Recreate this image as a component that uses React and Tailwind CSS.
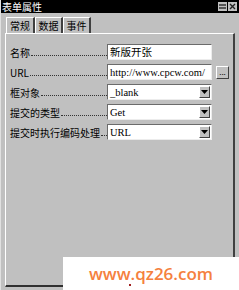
import React from "react";

const font = { fontFamily: '"Noto Sans CJK SC", "Liberation Sans", sans-serif' };
const serif = { fontFamily: '"Liberation Serif", serif' };

// sunken white field box
const Field = ({ children, dropdown }) => (
  <div className="flex h-[16px] w-[105px] items-stretch border border-t-[#6b6b6b] border-l-[#6b6b6b] border-r-[#ececec] border-b-[#ececec] bg-white">
    <div className="flex-1 overflow-hidden whitespace-nowrap pl-[2px] text-[10.5px] leading-[14px] text-black">
      {children}
    </div>
    {dropdown && (
      <div className="m-[1px] flex w-[11px] items-center justify-center border border-t-white border-l-white border-r-[#404040] border-b-[#404040] bg-[#c0c0c0]">
        <svg width="7" height="4" viewBox="0 0 7 4">
          <polygon points="0,0 7,0 3.5,4" fill="#000" />
        </svg>
      </div>
    )}
  </div>
);

const Row = ({ label, children, extra }) => (
  <div className="flex h-[20px] items-center">
    <div className="flex w-[101px] items-end pl-[4px] text-[10px] leading-[13px] text-black">
      <span className="whitespace-nowrap">{label}</span>
      <span className="mb-[3px] ml-[1px] flex-1 border-b border-dotted border-[#333]" />
    </div>
    {children}
    {extra}
  </div>
);

const Tab = ({ label, active }) => (
  <div
    className={`flex h-[16px] items-center justify-center whitespace-nowrap text-[10px] leading-[12px] text-black border-t border-l border-t-white border-l-white border-r-2 border-r-[#404040] ${
      active ? "w-[29px] -mb-[1px] bg-[#c0c0c0] z-10" : "w-[28px]"
    }`}
  >
    {label}
  </div>
);

export default function App() {
  return (
    <div
      className="relative h-[290px] w-[239px] overflow-hidden border-l border-l-[#e0e0e0] bg-[#c0c0c0]"
      style={font}
    >
      {/* TITLE BAR */}
      <div className="flex h-[13px] items-center justify-between bg-black pl-[1px] pr-[2px]">
        <span className="whitespace-nowrap text-[10px] leading-[13px] text-white">表单属性</span>
        <div className="flex gap-[1px]">
          <div className="flex h-[9px] w-[9px] flex-col justify-center gap-[1px] bg-[#c0c0c0] px-[1px]">
            <div className="h-[2px] bg-[#555]" />
            <div className="h-[2px] bg-[#555]" />
          </div>
          <div className="flex h-[9px] w-[9px] items-center justify-center bg-[#c0c0c0]">
            <svg width="7" height="7" viewBox="0 0 7 7">
              <path d="M1 1 L6 6 M6 1 L1 6" stroke="#222" strokeWidth="1.4" />
            </svg>
          </div>
        </div>
      </div>

      {/* BODY */}
      <div className="flex h-[274px] flex-col px-[4px] pt-[4px]">
        <div className="flex pl-[1px]">
          <Tab label="常规" active />
          <Tab label="数据" />
          <Tab label="事件" />
        </div>

        <div className="flex flex-1 flex-col border-t border-l border-t-white border-l-white border-r-2 border-b-2 border-r-[#404040] border-b-[#303030] pt-[8px] pr-[2px]">
          <Row label="名称">
            <Field>新版开张</Field>
          </Row>
          <Row
            label="URL"
            extra={
              <div className="ml-[4px] flex h-[13px] w-[13px] items-end justify-center border border-t-white border-l-white border-r-[#404040] border-b-[#404040] bg-[#c0c0c0] pb-[2px] text-[8px] leading-[8px]">
                ...
              </div>
            }
          >
            <Field>
              <span style={serif}>http://www.cpcw.com/</span>
            </Field>
          </Row>
          <Row label="框对象">
            <Field dropdown>
              <span style={serif}>_blank</span>
            </Field>
          </Row>
          <Row label="提交的类型">
            <Field dropdown>
              <span style={serif}>Get</span>
            </Field>
          </Row>
          <Row label="提交时执行编码处理">
            <Field dropdown>
              <span style={serif}>URL</span>
            </Field>
          </Row>
        </div>
      </div>

      {/* WATERMARK */}
      <div className="absolute bottom-0 right-0 flex h-[33px] w-[176px] items-center justify-center bg-white">
        <span
          className="text-[17px] font-semibold text-[#f5813e]"
          style={{ fontFamily: '"Open Sans", "Liberation Sans", sans-serif' }}
        >
          www.qz26.com
        </span>
        <div className="absolute bottom-[4px] left-[66px] h-[2px] w-[2px] bg-[#a02020]" />
      </div>
    </div>
  );
}
